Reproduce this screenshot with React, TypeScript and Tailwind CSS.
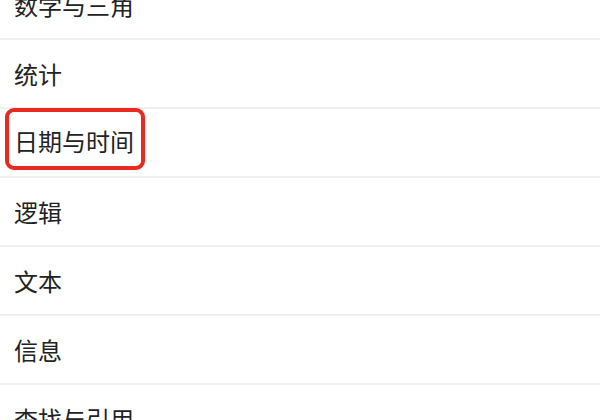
const items = ['数学与三角', '统计', '日期与时间', '逻辑', '文本', '信息', '查找与引用']

export default function App() {
  return (
    <div
      className="h-[420px] w-[600px] overflow-hidden bg-white text-[#222]"
      style={{ fontFamily: '"Noto Sans CJK SC", "Noto Sans", sans-serif' }}>
      <div className="-mt-[29px]">
        {items.map((name) => (
          <div
            key={name}
            className="flex h-[69px] items-center border-b-2 border-[#f0f0f0] pl-[14px]">
            {name === '日期与时间' ? (
              <div className="-ml-[9px] -mt-[8px] rounded-[9px] border-4 border-[#ea2a20] pb-[13px] pl-[5px] pr-[7px] pt-[17px]">
                <span className="block text-[24px] leading-[24px]">{name}</span>
              </div>
            ) : (
              <span className="text-[24px] leading-[24px]">{name}</span>
            )}
          </div>
        ))}
      </div>
    </div>
  )
}
